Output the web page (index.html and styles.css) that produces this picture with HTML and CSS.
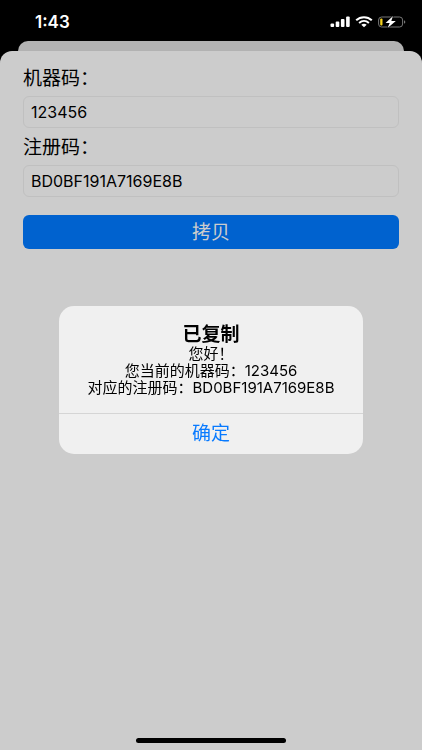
FILE: index.html
```html
<!DOCTYPE html>
<html lang="zh-CN">
<head>
<meta charset="utf-8">
<meta name="viewport" content="width=device-width, initial-scale=1">
<title>注册码</title>
<link rel="stylesheet" href="styles.css">
</head>
<body>
<div class="screen">
  <header class="status">
    <time class="clock">1:43</time>
    <div class="indicators">
      <svg class="signal" width="20" height="12" viewBox="0 0 20 12" fill="#fff" aria-hidden="true">
        <rect x="0.5" y="7.5" width="3.6" height="3.5" rx="1"/>
        <rect x="5.7" y="5.5" width="3.6" height="5.5" rx="1"/>
        <rect x="10.9" y="3" width="3.6" height="8" rx="1"/>
        <rect x="16.1" y="0.5" width="3.6" height="10.5" rx="1"/>
      </svg>
      <svg class="wifi" width="18" height="12" viewBox="0 0 18 12" fill="none" stroke="#fff" aria-hidden="true">
        <path d="M1.2 4.3C5.5.2 12.5.2 16.8 4.3" stroke-width="2"/>
        <path d="M4.1 7C7 4.4 11 4.4 13.9 7" stroke-width="1.9"/>
        <path d="M6.3 8.8Q9 6.9 11.7 8.8L9 11.2Z" fill="#fff" stroke="none"/>
      </svg>
      <svg class="battery" width="28" height="12" viewBox="0 0 28 12" aria-hidden="true">
        <rect x="0.6" y="1" width="24" height="10" rx="3" fill="none" stroke="#777" stroke-width="1"/>
        <path d="M26 4.2c1.8.6 1.8 3 0 3.6Z" fill="#777"/>
        <rect x="2.2" y="2.4" width="2.3" height="7.2" rx="1" fill="#f5d21f"/>
        <path d="M15 0 7.6 7h4.1L9.6 12 17.8 5h-4.5Z" fill="#fff" stroke="#000" stroke-width="1.2" paint-order="stroke"/>
      </svg>
    </div>
  </header>
  <div class="back-sheet"></div>
  <main class="sheet">
    <form class="form">
      <label for="machine">机器码：</label>
      <input id="machine" type="text" value="123456">
      <label for="code">注册码：</label>
      <input id="code" type="text" value="BD0BF191A7169E8B">
      <button class="copy" type="button">拷贝</button>
    </form>
    <div class="home-bar"></div>
  </main>
</div>
<div class="overlay">
  <section class="alert" role="alertdialog" aria-labelledby="title" aria-describedby="message">
    <div class="alert-body">
      <h1 id="title">已复制</h1>
      <p id="message">您好！<br>您当前的机器码：123456<br>对应的注册码：BD0BF191A7169E8B</p>
    </div>
    <button class="confirm" type="button">确定</button>
  </section>
</div>
</body>
</html>
```
FILE: styles.css
```css
* {
  box-sizing: border-box;
}

body {
  margin: 0;
  background: #000;
  color: #000;
  font-family: Inter, "Noto Sans CJK SC", sans-serif;
}

input,
button {
  font-family: inherit;
}

.screen {
  display: flex;
  flex-direction: column;
  min-height: 100vh;
}

.status {
  display: flex;
  align-items: center;
  justify-content: space-between;
  height: 41px;
  padding: 2px 16px 0 35px;
  color: #fff;
}

.clock {
  font-size: 17px;
  font-weight: 600;
}

.indicators {
  display: flex;
  align-items: center;
  gap: 5px;
}

.back-sheet {
  height: 10px;
  margin: 0 18px;
  border-radius: 10px 10px 0 0;
  background: #b2b2b2;
}

.sheet {
  display: flex;
  flex: 1;
  flex-direction: column;
  justify-content: space-between;
  padding: 12px 23px 7px;
  border-radius: 12px 12px 0 0;
  background: #ccc;
}

.form {
  display: flex;
  flex-direction: column;
}

.form label {
  height: 33px;
  font-size: 19px;
  line-height: 32px;
}

.form input {
  width: 100%;
  height: 32px;
  margin-bottom: 4px;
  padding: 0 7px;
  border: 1px solid #c0c0c0;
  border-radius: 6px;
  background: transparent;
  color: #000;
  font-size: 16px;
}

.copy {
  height: 34px;
  margin-top: 14px;
  padding: 2px 0 0;
  border: 0;
  border-radius: 6px;
  background: #0062cf;
  color: #ccc;
  font-size: 19px;
  line-height: 32px;
}

.home-bar {
  align-self: center;
  width: 36%;
  min-width: 150px;
  height: 5px;
  border-radius: 3px;
  background: #000;
}

.overlay {
  position: fixed;
  inset: 0;
  display: grid;
  place-items: center;
  padding-top: 10px;
}

.alert {
  width: 72%;
  overflow: hidden;
  border-radius: 15px;
  background: #f0f0f0;
  text-align: center;
}

.alert-body {
  padding: 19px 0 17px;
}

.alert h1 {
  margin: 0;
  font-size: 19px;
  font-weight: 700;
  line-height: 20px;
}

.alert p {
  margin: 0;
  font-size: 15px;
  line-height: 17px;
  white-space: nowrap;
}

.confirm {
  width: 100%;
  height: 41px;
  padding: 0;
  border: 0;
  border-top: 1px solid #d5d5d5;
  background: transparent;
  color: #087aff;
  font-size: 19px;
  line-height: 40px;
}
```
